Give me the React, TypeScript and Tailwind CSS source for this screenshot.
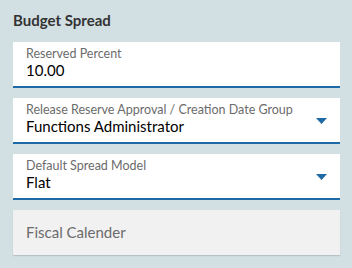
function Caret() {
  return (
    <svg width="11" height="6" viewBox="0 0 11 6" className="shrink-0">
      <path d="M0 0h11L5.5 6z" fill="#1f6aa3" />
    </svg>
  );
}

function Field({ label, value, select }: { label: string; value: string; select?: boolean }) {
  return (
    <div className="flex h-[46px] items-end border-b-2 border-[#1d6aa6] bg-white pl-[13px] pr-[13px] pb-[6px]">
      <div className="flex min-w-0 flex-1 flex-col">
        <span className="text-[12.5px] leading-[15px] text-[#6b6b6b]">{label}</span>
        <span className="text-[15px] leading-[19px] text-black">{value}</span>
      </div>
      {select && (
        <div className="mb-[12px]">
          <Caret />
        </div>
      )}
    </div>
  );
}

export default function App() {
  return (
    <div className="h-[268px] w-[352px] bg-[#d2dfe3] pl-[13px] pr-[12px] pt-[10px] font-['Lato',sans-serif]">
      <h2 className="text-[15px] font-bold leading-[20px] text-[#333]">Budget Spread</h2>
      <div className="mt-[12px] flex flex-col gap-[10px]">
        <Field label="Reserved Percent" value="10.00" />
        <Field label="Release Reserve Approval / Creation Date Group" value="Functions Administrator" select />
        <Field label="Default Spread Model" value="Flat" select />
        <div className="flex h-[45px] items-center bg-[#f1f1f1] pl-[13px] text-[15px] text-[#6b6b6b] shadow-[0_1px_1px_rgba(0,0,0,0.12)]">
          Fiscal Calender
        </div>
      </div>
    </div>
  );
}
